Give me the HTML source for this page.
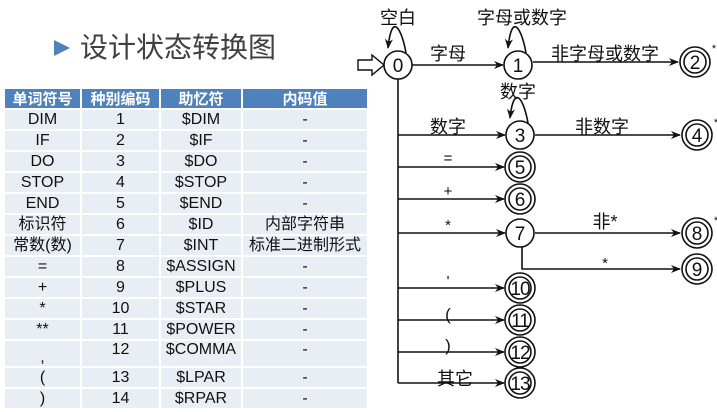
<!DOCTYPE html>
<html><head><meta charset="utf-8"><style>
body{margin:0;width:717px;height:412px;background:#fff;overflow:hidden;position:relative;font-family:"Liberation Sans","Noto Sans CJK SC",sans-serif}
.title{position:absolute;left:80px;top:28px;font-size:28px;color:#404040;font-family:"Noto Sans CJK SC",sans-serif;line-height:36px}
.tri{position:absolute;left:54px;top:40px;width:0;height:0;border-left:16px solid #4f81bd;border-top:8px solid transparent;border-bottom:8px solid transparent}
table{position:absolute;left:3px;top:87px;border-collapse:collapse;width:366px;font-size:16px;color:#111}
td,th{text-align:center;padding:0;border:2px solid #fff;line-height:17px}
th{background:#4f81bd;color:#fff;font-weight:bold;height:19px;font-family:"Noto Sans CJK SC",sans-serif;font-size:15px}
td{background:#e9edf4;height:19px}
tr.tall td{height:25px}
svg{position:absolute;left:0;top:0}
svg text{font-family:"Liberation Sans","Noto Sans CJK SC",sans-serif;fill:#111}
</style></head><body>
<div class="tri"></div><div class="title">设计状态转换图</div>
<table>
<tr><th style="width:75px">单词符号</th><th style="width:77px">种别编码</th><th style="width:80px">助忆符</th><th>内码值</th></tr>
<tr><td>DIM</td><td>1</td><td>$DIM</td><td>-</td></tr>
<tr><td>IF</td><td>2</td><td>$IF</td><td>-</td></tr>
<tr><td>DO</td><td>3</td><td>$DO</td><td>-</td></tr>
<tr><td>STOP</td><td>4</td><td>$STOP</td><td>-</td></tr>
<tr><td>END</td><td>5</td><td>$END</td><td>-</td></tr>
<tr><td>标识符</td><td>6</td><td>$ID</td><td>内部字符串</td></tr>
<tr><td>常数(数)</td><td>7</td><td>$INT</td><td>标准二进制形式</td></tr>
<tr><td>=</td><td>8</td><td>$ASSIGN</td><td>-</td></tr>
<tr><td>+</td><td>9</td><td>$PLUS</td><td>-</td></tr>
<tr><td>*</td><td>10</td><td>$STAR</td><td>-</td></tr>
<tr><td>**</td><td>11</td><td>$POWER</td><td>-</td></tr>
<tr class="tall"><td style="vertical-align:bottom">,</td><td style="vertical-align:top">12</td><td style="vertical-align:top">$COMMA</td><td style="vertical-align:top">-</td></tr>
<tr><td>(</td><td>13</td><td>$LPAR</td><td>-</td></tr>
<tr><td>)</td><td>14</td><td>$RPAR</td><td>-</td></tr>
</table>
<svg width="717" height="412" viewBox="0 0 717 412">
<defs><marker id="a" markerWidth="10" markerHeight="8" refX="9" refY="4" orient="auto" markerUnits="userSpaceOnUse"><path d="M0,0 L10,4 L0,8 L3,4 Z" fill="#111"/></marker></defs>
<g stroke="#111" stroke-width="1.6" fill="none">
<path d="M358,60 H372 V55 L384,65 L372,75 V70 H358 Z" stroke-width="1.4"/>
<path d="M406,53 C402,30 392,10 388,48" marker-end="url(#a)"/>
<path d="M526,53 C522,30 512,10 508,48" marker-end="url(#a)"/>
<path d="M528,123 C524,100 514,82 510,118" marker-end="url(#a)"/>
<line x1="412" y1="65" x2="503" y2="65" marker-end="url(#a)"/>
<line x1="533" y1="62" x2="678" y2="62" marker-end="url(#a)"/>
<line x1="398" y1="79" x2="398" y2="383"/>
<line x1="398" y1="135" x2="505" y2="135" marker-end="url(#a)"/>
<line x1="535" y1="135" x2="680" y2="135" marker-end="url(#a)"/>
<line x1="398" y1="167" x2="504" y2="167" marker-end="url(#a)"/>
<line x1="398" y1="199" x2="504" y2="199" marker-end="url(#a)"/>
<line x1="398" y1="233" x2="505" y2="233" marker-end="url(#a)"/>
<line x1="535" y1="233" x2="680" y2="233" marker-end="url(#a)"/>
<path d="M522,247 V269 H680" marker-end="url(#a)"/>
<line x1="398" y1="288" x2="504" y2="288" marker-end="url(#a)"/>
<line x1="398" y1="320" x2="504" y2="320" marker-end="url(#a)"/>
<line x1="398" y1="352" x2="504" y2="352" marker-end="url(#a)"/>
<line x1="398" y1="383" x2="504" y2="383" marker-end="url(#a)"/>
<g fill="#fff">
<circle cx="398" cy="65" r="14"/><circle cx="518" cy="65" r="14"/>
<circle cx="520" cy="135" r="14"/><circle cx="520" cy="233" r="14"/>
<circle cx="695" cy="62" r="15"/><circle cx="697" cy="135" r="15"/>
<circle cx="520" cy="167" r="15"/><circle cx="520" cy="199" r="15"/>
<circle cx="697" cy="233" r="15"/><circle cx="697" cy="269" r="15"/>
<circle cx="520" cy="288" r="15"/><circle cx="520" cy="320" r="15"/>
<circle cx="520" cy="352" r="15"/><circle cx="520" cy="383" r="15"/>
</g>
<circle cx="695" cy="62" r="11"/><circle cx="697" cy="135" r="11"/>
<circle cx="520" cy="167" r="11"/><circle cx="520" cy="199" r="11"/>
<circle cx="697" cy="233" r="11"/><circle cx="697" cy="269" r="11"/>
<circle cx="520" cy="288" r="11"/><circle cx="520" cy="320" r="11"/>
<circle cx="520" cy="352" r="11"/><circle cx="520" cy="383" r="11"/>
</g>
<g font-size="19" text-anchor="middle">
<text x="398" y="72">0</text><text x="518" y="72">1</text><text x="695" y="69">2</text>
<text x="520" y="142">3</text><text x="697" y="142">4</text><text x="520" y="174">5</text>
<text x="520" y="206">6</text><text x="520" y="240">7</text><text x="697" y="240">8</text>
<text x="697" y="276">9</text><text x="520" y="295" letter-spacing="-1">10</text>
<text x="520" y="327" letter-spacing="-1">11</text><text x="520" y="359" letter-spacing="-1">12</text>
<text x="520" y="390" letter-spacing="-1">13</text>
</g>
<g font-size="18" text-anchor="middle">
<text x="398" y="24">空白</text><text x="522" y="24">字母或数字</text>
<text x="448" y="60">字母</text><text x="605" y="60">非字母或数字</text>
<text x="518" y="98">数字</text><text x="448" y="133">数字</text><text x="602" y="133">非数字</text>
<text x="448" y="163" font-size="15">=</text><text x="448" y="196" font-size="15">+</text>
<text x="448" y="230" font-size="15">*</text><text x="605" y="228">非*</text>
<text x="605" y="268" font-size="15">*</text><text x="448" y="286" font-size="15">'</text>
<text x="448" y="320" font-size="17">(</text><text x="448" y="351" font-size="17">)</text>
<text x="455" y="385">其它</text>
<text x="714" y="52" font-size="11">*</text><text x="716" y="126" font-size="11">*</text><text x="716" y="224" font-size="11">*</text>
</g>
</svg>
</body></html>
